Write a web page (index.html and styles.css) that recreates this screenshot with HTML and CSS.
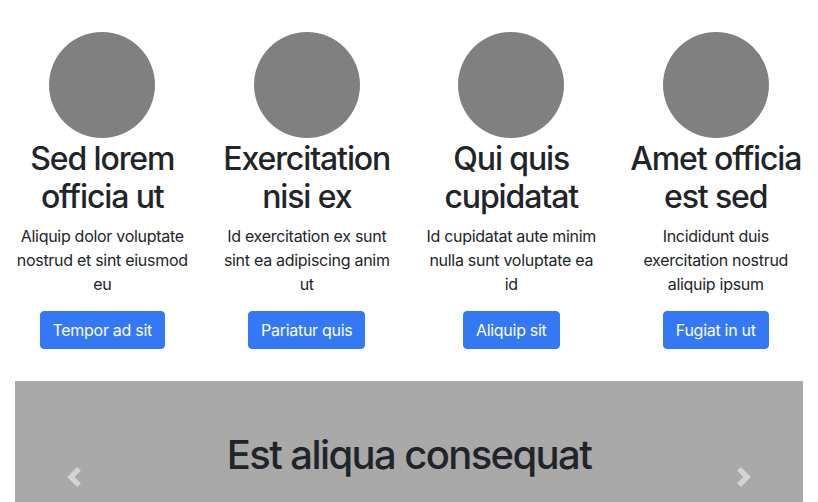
FILE: index.html
```html
<!DOCTYPE html>
<html lang="en">
<head>
<meta charset="utf-8">
<title>Marketing</title>
<link rel="stylesheet" href="styles.css">
</head>
<body>
<div class="page">
  <div class="features">
    <div class="feature">
      <div class="avatar"></div>
      <h2 class="feature-title">Sed lorem officia ut</h2>
      <p class="feature-text">Aliquip dolor voluptate nostrud et sint eiusmod eu</p>
      <a class="btn" href="#">Tempor ad sit</a>
    </div>
    <div class="feature">
      <div class="avatar"></div>
      <h2 class="feature-title">Exercitation nisi ex</h2>
      <p class="feature-text">Id exercitation ex sunt sint ea adipiscing anim ut</p>
      <a class="btn" href="#">Pariatur quis</a>
    </div>
    <div class="feature">
      <div class="avatar"></div>
      <h2 class="feature-title">Qui quis cupidatat</h2>
      <p class="feature-text">Id cupidatat aute minim nulla sunt voluptate ea id</p>
      <a class="btn" href="#">Aliquip sit</a>
    </div>
    <div class="feature">
      <div class="avatar"></div>
      <h2 class="feature-title">Amet officia est sed</h2>
      <p class="feature-text">Incididunt duis exercitation nostrud aliquip ipsum</p>
      <a class="btn" href="#">Fugiat in ut</a>
    </div>
  </div>
  <div class="carousel">
    <h1 class="carousel-title">Est aliqua consequat</h1>
    <a class="carousel-control prev" href="#" aria-label="Previous">
      <svg class="chev" viewBox="0 0 8 8" width="20" height="20"><path fill="#fff" d="M5.25 0l-4 4 4 4 1.5-1.5L4.25 4l2.5-2.5L5.25 0z"/></svg>
    </a>
    <a class="carousel-control next" href="#" aria-label="Next">
      <svg class="chev" viewBox="0 0 8 8" width="20" height="20"><path fill="#fff" d="M2.75 0l-1.5 1.5L3.75 4l-2.5 2.5L2.75 8l4-4-4-4z"/></svg>
    </a>
  </div>
</div>
</body>
</html>
```

FILE: styles.css
```css
html, body {
  margin: 0;
  padding: 0;
  background: #fff;
}
body {
  font-family: Inter, "Noto Sans", "Liberation Sans", sans-serif;
  color: #212529;
  font-size: 16px;
  line-height: 1.5;
  overflow: hidden;
}
.page {
  padding-top: 32px;
}
.features {
  display: grid;
  grid-template-columns: repeat(4, 1fr);
}
.feature {
  padding: 0 12px;
  text-align: center;
  display: flex;
  flex-direction: column;
  align-items: center;
}
.avatar {
  width: 106px;
  height: 106px;
  border-radius: 50%;
  background: #808080;
}
.feature-title {
  font-size: 32px;
  font-weight: 500;
  line-height: 1.2;
  letter-spacing: -0.035em;
  margin: 0 0 7px;
  padding-top: 2px;
}
.feature-text {
  margin: 0 0 15px;
  font-size: 16px;
  line-height: 24px;
  letter-spacing: -0.018em;
}
.btn {
  display: inline-block;
  background: #3478f6;
  color: #fff;
  text-decoration: none;
  border-radius: 4px;
  padding: 6px 12px;
  border: 1px solid #3478f6;
  line-height: 24px;
  font-size: 16px;
  letter-spacing: -0.018em;
}
.carousel {
  position: relative;
  margin: 32px 15px 0;
  background: #a9a9a9;
  height: 192px;
  padding-top: 50px;
  box-sizing: border-box;
  text-align: center;
}
.carousel-title {
  margin: 0;
  font-size: 40px;
  font-weight: 500;
  line-height: 48px;
  letter-spacing: -0.04em;
}
.carousel-control {
  position: absolute;
  top: 0;
  bottom: 0;
  width: 15%;
  display: flex;
  align-items: center;
  justify-content: center;
  opacity: 0.5;
}
.carousel-control.prev { left: 0; }
.carousel-control.next { right: 0; }
.chev { display: block; }
```
